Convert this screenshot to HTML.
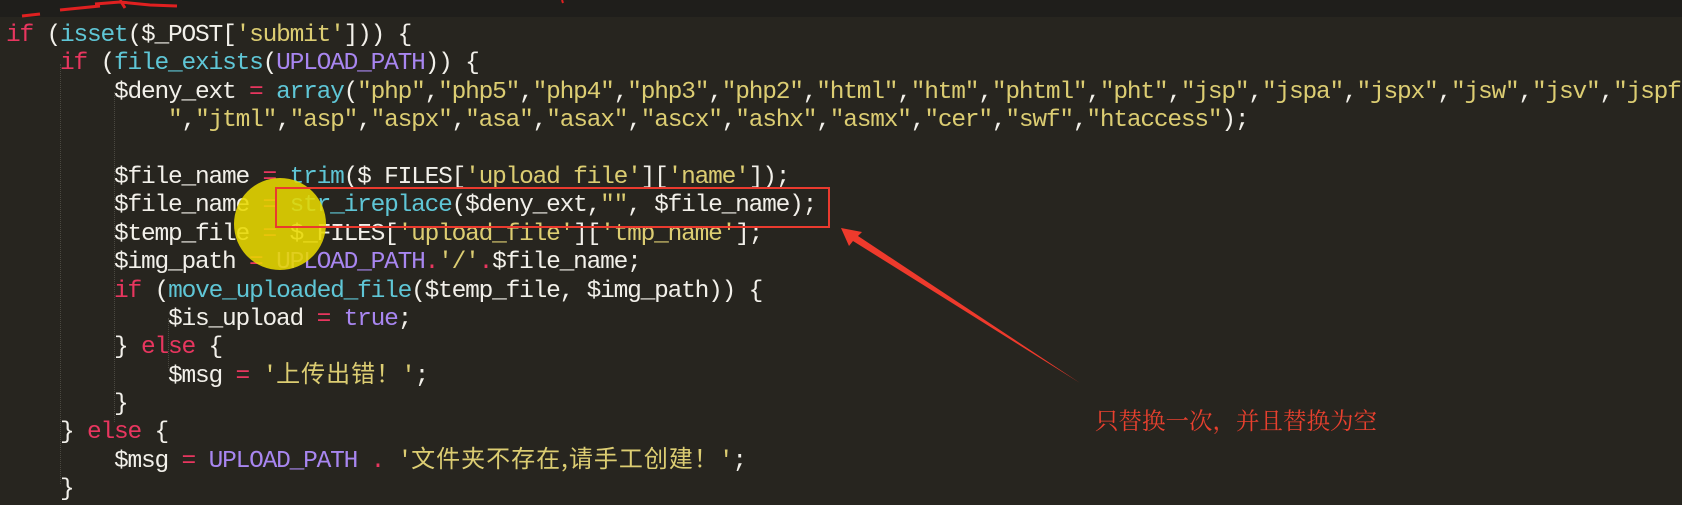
<!DOCTYPE html>
<html><head><meta charset="utf-8"><style>
html,body{margin:0;padding:0;}
body{width:1682px;height:488px;background:#27251f;position:relative;overflow:hidden;}
.top{position:absolute;left:0;top:0;width:1682px;height:17px;background:#1f1e1b;}
.code{position:absolute;left:6px;top:22px;font-family:"Liberation Mono","Noto Sans CJK SC",monospace;font-size:24.5px;letter-spacing:-1.2px;line-height:28.4px;color:#f2f0ea;white-space:pre;}
.code div{height:28.4px;}
.k{color:#e8365f}.f{color:#5fc6d6}.s{color:#dccd72}.c{color:#a886f0}
.cj{font-family:"Noto Sans CJK SC",sans-serif;font-size:24px;line-height:0;letter-spacing:1px;}
.g{position:absolute;width:0;border-left:1px dotted #4a4840;}
</style></head><body>
<div class="top"></div>
<svg style="position:absolute;left:0;top:0" width="1682" height="20">
<path d="M22 16 L40 14 M60 10 L100 6 M95 4 L120 2 L150 5 L177 6 M120 0 L125 8" stroke="#e02020" stroke-width="3" fill="none"/>
<path d="M562 0 L563 3" stroke="#e02020" stroke-width="2"/>
</svg>
<div class="g" style="left:60px;top:64px;height:420px"></div>
<div class="g" style="left:114px;top:92px;height:330px"></div>
<div class="g" style="left:168px;top:318px;height:50px"></div>
<div class="code"><div><span class="k">if</span> (<span class="f">isset</span>($_POST[<span class="s">'submit'</span>])) {</div><div>    <span class="k">if</span> (<span class="f">file_exists</span>(<span class="c">UPLOAD_PATH</span>)) {</div><div>        $deny_ext <span class="k">=</span> <span class="f">array</span>(<span class="s">"php"</span>,<span class="s">"php5"</span>,<span class="s">"php4"</span>,<span class="s">"php3"</span>,<span class="s">"php2"</span>,<span class="s">"html"</span>,<span class="s">"htm"</span>,<span class="s">"phtml"</span>,<span class="s">"pht"</span>,<span class="s">"jsp"</span>,<span class="s">"jspa"</span>,<span class="s">"jspx"</span>,<span class="s">"jsw"</span>,<span class="s">"jsv"</span>,<span class="s">"jspf</span></div><div>            <span class="s">"</span>,<span class="s">"jtml"</span>,<span class="s">"asp"</span>,<span class="s">"aspx"</span>,<span class="s">"asa"</span>,<span class="s">"asax"</span>,<span class="s">"ascx"</span>,<span class="s">"ashx"</span>,<span class="s">"asmx"</span>,<span class="s">"cer"</span>,<span class="s">"swf"</span>,<span class="s">"htaccess"</span>);</div><div> </div><div>        $file_name <span class="k">=</span> <span class="f">trim</span>($ FILES[<span class="s">'upload file'</span>][<span class="s">'name'</span>]);</div><div>        $file_name <span class="k">=</span> <span class="f">str_ireplace</span>($deny_ext,<span class="s">""</span>, $file_name);</div><div>        $temp_file <span class="k">=</span> $_FILES[<span class="s">'upload_file'</span>][<span class="s">'tmp_name'</span>];</div><div>        $img_path <span class="k">=</span> <span class="c">UPLOAD_PATH</span><span class="k">.</span><span class="s">'/'</span><span class="k">.</span>$file_name;</div><div>        <span class="k">if</span> (<span class="f">move_uploaded_file</span>($temp_file, $img_path)) {</div><div>            $is_upload <span class="k">=</span> <span class="c">true</span>;</div><div>        } <span class="k">else</span> {</div><div>            $msg <span class="k">=</span> <span class="s">'<span class="cj">上传出错！</span>'</span>;</div><div>        }</div><div>    } <span class="k">else</span> {</div><div>        $msg <span class="k">=</span> <span class="c">UPLOAD_PATH</span> <span class="k">.</span> <span class="s">'<span class="cj">文件夹不存在,请手工创建！</span>'</span>;</div><div>    }</div></div>
<div style="position:absolute;left:234px;top:178px;width:92px;height:92px;border-radius:50%;background:rgba(232,216,0,0.88);"></div>
<div style="position:absolute;left:275px;top:187px;width:551px;height:37px;border:2px solid #ea3a2e;"></div>
<svg style="position:absolute;left:0;top:0" width="1682" height="488">
<path d="M841 228 L862 232 L858 236 L1080 383 L853 241 L849 246 Z" fill="#ee3a2c"/>
</svg>
<div style="position:absolute;left:1095px;top:404px;font-family:'Noto Serif CJK SC',serif;font-size:23.5px;color:#e8402e;white-space:nowrap;line-height:30px;">只替换一次，并且替换为空</div>
</body></html>
